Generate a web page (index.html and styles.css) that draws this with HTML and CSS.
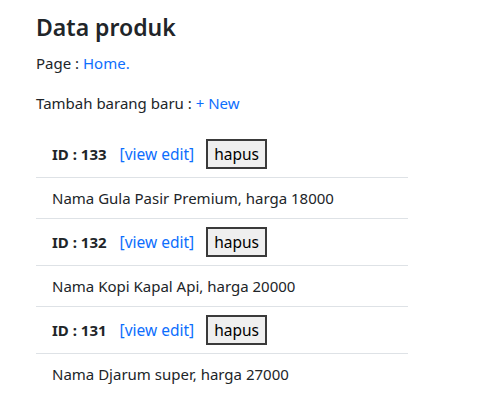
FILE: index.html
```html
<!DOCTYPE html>
<html>
<head>
<meta charset="utf-8">
<link rel="stylesheet" href="styles.css">
</head>
<body>
<div class="container">
  <h2 class="title">Data produk</h2>
  <p>Page : <a href="#">Home.</a></p>
  <p>Tambah barang baru : <a href="#">+ New</a></p>
  <table class="table">
    <tbody>
      <tr><td><div class="row-head"><span class="id">ID : 133</span><a class="edit" href="#">[view edit]</a><button class="btn">hapus</button></div></td></tr>
      <tr><td>Nama Gula Pasir Premium, harga 18000</td></tr>
      <tr><td><div class="row-head"><span class="id">ID : 132</span><a class="edit" href="#">[view edit]</a><button class="btn">hapus</button></div></td></tr>
      <tr><td>Nama Kopi Kapal Api, harga 20000</td></tr>
      <tr><td><div class="row-head"><span class="id">ID : 131</span><a class="edit" href="#">[view edit]</a><button class="btn">hapus</button></div></td></tr>
      <tr class="last"><td>Nama Djarum super, harga 27000</td></tr>
    </tbody>
  </table>
</div>
</body>
</html>
```
FILE: styles.css
```css
* { box-sizing: border-box; }
body {
  margin: 0;
  font-family: "Noto Sans", sans-serif;
  font-size: 15px;
  line-height: 24px;
  color: #212529;
  background: #fff;
}
.container {
  padding: 12px 0 0 36px;
  width: 408px;
}
.title {
  margin: 0 0 8px;
  font-size: 23px;
  line-height: 31px;
  font-weight: 600;
}
p { margin: 0 0 16px; }
a { color: #0d6efd; text-decoration: none; }
.table {
  width: 100%;
  border-collapse: collapse;
}
.table td {
  padding: 8px 16px;
  border-bottom: 1px solid #dee2e6;
}
.table tr.last td { border-bottom: none; }
.row-head {
  display: flex;
  align-items: center;
}
.id { font-weight: 700; }
.edit { margin-left: 13px; font-size: 15.5px; }
.btn {
  margin-left: 12px;
  font-family: inherit;
  font-size: 15.5px;
  line-height: 24px;
  height: 30px;
  padding: 1px 6px;
  border: 2px solid #3a3a3a;
  background: #efefef;
  color: #000;
}
```
